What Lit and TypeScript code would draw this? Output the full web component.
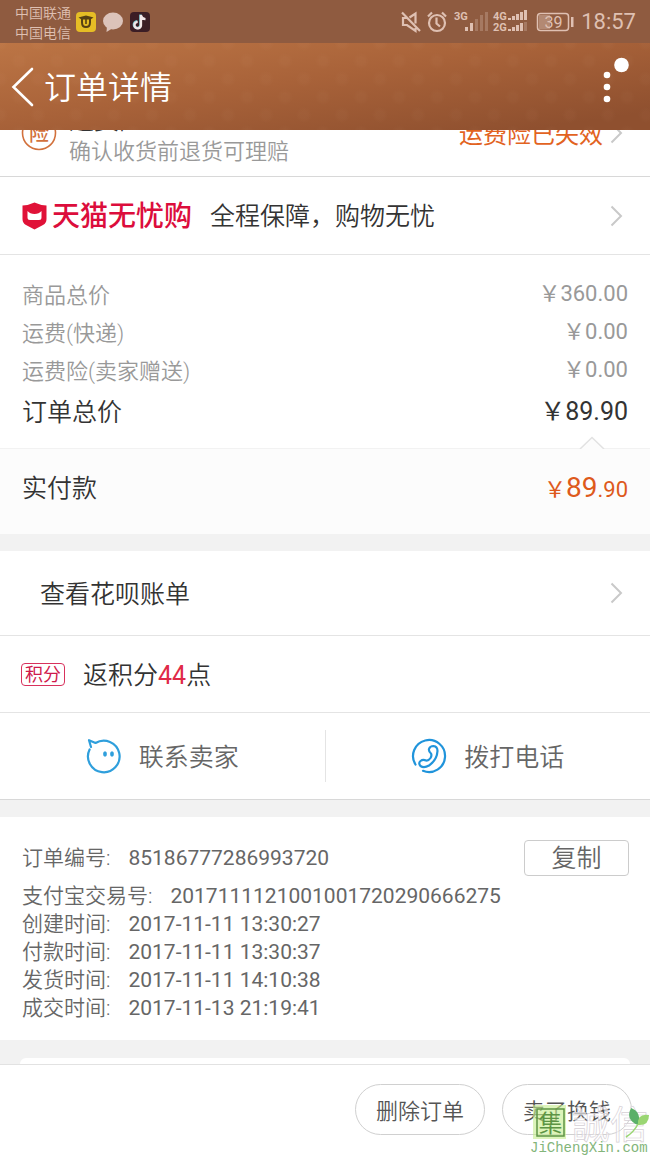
import { LitElement, html, css, svg } from "lit";
import { customElement } from "lit/decorators.js";

const priceLines = [
  { label: "商品总价", value: "￥360.00" },
  { label: "运费(快递)", value: "￥0.00" },
  { label: "运费险(卖家赠送)", value: "￥0.00" },
];

const times = [
  { label: "支付宝交易号:", value: "2017111121001001720290666275" },
  { label: "创建时间:", value: "2017-11-11 13:30:27" },
  { label: "付款时间:", value: "2017-11-11 13:30:37" },
  { label: "发货时间:", value: "2017-11-11 14:10:38" },
  { label: "成交时间:", value: "2017-11-13 21:19:41" },
];

const chevron = html`<svg class="chevron" width="13" height="22" viewBox="0 0 13 22" aria-hidden="true">
  <path d="M1.5 1.5 L11 11 L1.5 20.5" fill="none" stroke="#c9c9c9" stroke-width="2" />
</svg>`;

const bars = (x: number, y: number, w: number, step: number, h: number[], dim: number) =>
  h.map((v, i) => svg`<rect x=${x + i * step} y=${y - v} width=${w} height=${v} opacity=${i >= dim ? 0.3 : 1} />`);

@customElement("status-bar")
class StatusBar extends LitElement {
  static styles = css`
    :host {
      display: block;
      background: #8f5b40;
      color: #dfc0b2;
      font-family: Roboto, "Noto Sans CJK SC", sans-serif;
    }
    .bar {
      display: flex;
      align-items: center;
      justify-content: space-between;
      height: 43px;
      padding: 0 14px 0 15px;
    }
    .side {
      display: flex;
      align-items: center;
    }
    .carriers {
      font-size: 14px;
      line-height: 20px;
      font-weight: 350;
      margin-right: 4px;
      padding-top: 2px;
    }
    .time {
      font-size: 22px;
      line-height: 43px;
      margin-left: 7px;
    }
    svg {
      display: block;
    }
  `;
  render() {
    return html`<div class="bar">
      <div class="side">
        <div class="carriers"><div>中国联通</div><div>中国电信</div></div>
        <svg width="76" height="22" viewBox="0 0 76 22" aria-hidden="true">
          <rect x="1" y="1" width="20" height="20" rx="4" fill="#e6bd25" />
          <path d="M3.500 6.500 Q7 5.500 11 4.500 Q15 5.500 18.500 6.500 L15.500 8.500 H6.500 Z" fill="#574013" />
          <path d="M7 8 V11.500 Q7 16 11 16 Q15 16 15 11.500 V8" fill="none" stroke="#574013" stroke-width="2" />
          <path d="M10.200 8 H11.800 V13 H10.200 Z" fill="#574013" />
          <ellipse cx="38" cy="10" rx="10" ry="8.500" fill="#dcc3ba" />
          <path d="M32 15 L31.500 21 L38 17 Z" fill="#dcc3ba" />
          <rect x="55" y="1" width="20" height="20" rx="4" fill="#3b1d25" />
          <path d="M66 4 V13.500 A3.300 3.300 0 1 1 62.700 10.800" fill="none" stroke="#75c8cf" stroke-width="2.600" transform="translate(-.5 -.4)" />
          <path d="M66 4 V13.500 A3.300 3.300 0 1 1 62.700 10.800 M66 4.500 Q67 8 70.500 8.200" fill="none" stroke="#f2e6e8" stroke-width="2.300" />
        </svg>
      </div>
      <div class="side">
        <svg width="174" height="30" viewBox="402 7 174 30" fill="#dfc0b2" aria-hidden="true">
          <g fill="none" stroke="#dfc0b2" stroke-width="2.200">
            <path d="M409 18 H405 V25 H409 L417.500 31 V28 M411.500 17.500 L417.500 13.500 V23.500 M404 12.500 L422 31" />
            <circle cx="439" cy="23" r="8" />
            <path d="M438.500 17.500 V23.500 L442 26.500 M430 16.500 L434 12.500 M444 12.500 L448 16.500" />
          </g>
          <text x="456" y="20" font-size="11" font-weight="700">3G</text>
          ${bars(467, 31, 3, 5, [4, 8, 12, 16, 19], 2)}
          <text x="495" y="20" font-size="11" font-weight="700">4G</text>
          <text x="495" y="31" font-size="11" font-weight="700">2G</text>
          ${bars(510, 20, 3, 4, [2, 4, 6, 8, 10], 9)}
          ${bars(510, 31, 3, 4, [2, 4, 6, 8, 9], 4)}
          <rect x="541" y="15" width="11" height="14" opacity=".45" />
          <rect x="539.500" y="13.500" width="31" height="17" rx="3" fill="none" stroke="#dfc0b2" stroke-width="1.500" />
          <rect x="573" y="17" width="2.500" height="10" />
          <text x="555.500" y="28" font-size="16" text-anchor="middle">39</text>
        </svg>
        <div class="time">18:57</div>
      </div>
    </div>`;
  }
}

@customElement("app-root")
class AppRoot extends LitElement {
  static styles = css`
    :host {
      display: block;
      position: relative;
      min-height: 100vh;
      overflow: hidden;
      background: #fff;
      color: #333;
      font-family: Roboto, "Noto Sans CJK SC", sans-serif;
      font-weight: 400;
      font-size: 25px;
      line-height: 36px;
    }
    * {
      box-sizing: border-box;
    }
    svg {
      display: block;
      flex: none;
    }
    button {
      font: inherit;
      color: inherit;
      background: none;
      border: 0;
      margin: 0;
      padding: 0;
      cursor: pointer;
    }
    a {
      color: inherit;
      text-decoration: none;
    }
    .cjk {
      font-weight: 350;
    }
    .header {
      display: flex;
      align-items: center;
      height: 87px;
      padding: 0 21px 0 11px;
      color: #fff;
      background:
        radial-gradient(circle at 50% 50%, rgba(255, 220, 190, 0.025) 0 4px, transparent 8px) 0 0 / 38px 36px,
        radial-gradient(circle at 50% 50%, rgba(255, 220, 190, 0.025) 0 4px, transparent 8px) 19px 18px / 38px 36px,
        linear-gradient(172deg, #bc7545 0%, #a86239 45%, #8f502f 90%);
    }
    .title {
      flex: 1;
      margin: 0 0 0 10px;
      padding-top: 3px;
      font-size: 32px;
      line-height: 44px;
      font-weight: 350;
    }
    .row {
      display: flex;
      align-items: center;
      padding: 0 27px 0 21px;
      border-bottom: 1px solid #e4e4e4;
    }
    .grow {
      flex: 1;
    }
    .row .text {
      padding-top: 3px;
    }
    .insurance {
      height: 47px;
      align-items: flex-end;
      overflow: hidden;
      border-bottom-color: #d8d8d8;
      color: #999;
    }
    .insurance .badge {
      margin-bottom: 25px;
    }
    .insurance .desc {
      flex: 1;
      margin-left: 12px;
      padding-bottom: 8px;
      font-size: 22px;
      line-height: 32px;
    }
    .insurance .name {
      color: #333;
      font-size: 25px;
      line-height: 30px;
    }
    .insurance .state {
      color: #e2631f;
      padding-bottom: 23px;
      margin-right: 7px;
      font-size: 24px;
      font-weight: 400;
    }
    .insurance .chevron {
      margin-bottom: 32px;
    }
    .tmall {
      height: 78px;
    }
    .tmall .brand {
      margin: 0 18px 0 4px;
      padding-top: 3px;
      font-size: 28px;
      font-weight: 500;
      color: #dc0d3c;
    }
    .prices {
      padding: 22px 22px 13px;
      margin: 0;
    }
    .line {
      display: flex;
      justify-content: space-between;
      font-size: 22px;
      line-height: 38px;
      color: #999;
    }
    .line dt {
      font-weight: 350;
    }
    .line dd,
    .facts dd {
      margin: 0;
    }
    .line dd {
      line-height: 34px;
    }
    .line.total {
      font-size: 25px;
      line-height: 44px;
      color: #333;
    }
    .total dd {
      line-height: 42px;
    }
    .paid {
      position: relative;
      display: flex;
      align-items: center;
      justify-content: space-between;
      height: 86px;
      padding: 0 22px 6px;
      background: #fcfcfc;
      border-top: 1px solid #f2f2f2;
    }
    .notch {
      position: absolute;
      right: 45px;
      top: -13px;
    }
    .amount {
      color: #de5a1c;
      font-size: 22px;
    }
    .amount b {
      font-size: 28px;
      font-weight: 400;
    }
    .gap {
      height: 17px;
      background: #f2f2f2;
    }
    .bill {
      height: 85px;
      padding-left: 40px;
    }
    .points {
      height: 77px;
    }
    .tag {
      width: 44px;
      margin-right: 18px;
      border: 1px solid #d8315c;
      border-radius: 4px;
      color: #cf1a4c;
      font-size: 18px;
      line-height: 21px;
      font-weight: 400;
      text-align: center;
    }
    .points em {
      font-style: normal;
      font-weight: 400;
      color: #e02a48;
    }
    .contact {
      display: flex;
      align-items: center;
      height: 87px;
      border-bottom: 1px solid #d8d8d8;
      color: #666;
    }
    .contact button {
      flex: 1;
      display: flex;
      align-items: center;
      justify-content: center;
      gap: 17px;
      height: 52px;
      font-weight: 350;
    }
    .contact span {
      padding-top: 4px;
    }
    .contact button + button {
      border-left: 1px solid #e4e4e4;
    }
    .facts {
      padding: 23px 21px 18px 22px;
      margin: 0;
      font-size: 21px;
      line-height: 28px;
      color: #666;
    }
    .fact {
      display: flex;
      gap: 18px;
      align-items: center;
    }
    .fact dt {
      font-weight: 350;
    }
    .order {
      margin-bottom: 6px;
    }
    .copy {
      display: block;
      width: 105px;
      height: 36px;
      padding-top: 2px;
      border: 1px solid #ccc;
      border-radius: 4px;
      font-size: 25px;
      line-height: 32px;
      font-weight: 350;
    }
    .next {
      height: 24px;
      padding: 18px 20px 0;
      background: #f2f2f2;
    }
    .card {
      height: 6px;
      background: #fff;
      border-radius: 6px 6px 0 0;
    }
    .footer {
      display: flex;
      justify-content: flex-end;
      gap: 17px;
      padding: 19px 18px 20px;
      border-top: 1px solid #e2e2e2;
      color: #555;
    }
    .footer button {
      width: 130px;
      height: 51px;
      padding-top: 4px;
      border: 1px solid #d0d0d0;
      border-radius: 26px;
      font-size: 22px;
      font-weight: 350;
    }
    .mark {
      position: absolute;
      right: 0;
      bottom: 0;
    }
    .mark text {
      font-family: "Noto Sans CJK TC", sans-serif;
    }
    .mark .site {
      font-family: "Liberation Mono", monospace;
    }
  `;

  render() {
    return html`
      <status-bar></status-bar>
      <header class="header">
        <button aria-label="返回">
          <svg width="23" height="40" viewBox="0 0 23 40">
            <path d="M21 2 L2.500 20 L21 38" fill="none" stroke="#fff" stroke-width="2.600" stroke-linecap="round" />
          </svg>
        </button>
        <h1 class="title">订单详情</h1>
        <button aria-label="更多">
          <svg width="27" height="60" viewBox="0 0 27 60" fill="#fff">
            <circle cx="5" cy="18" r="3.300" /><circle cx="5" cy="30" r="3.300" /><circle cx="5" cy="42" r="3.300" />
            <circle cx="19.500" cy="8" r="7.300" />
          </svg>
        </button>
      </header>

      <main>
        <a class="row insurance cjk" href="#insurance">
          <svg class="badge" width="36" height="36" viewBox="0 0 36 36">
            <circle cx="18" cy="18" r="16.500" fill="none" stroke="#d2713c" stroke-width="1.600" />
            <text x="18" y="26" font-size="20" font-weight="500" text-anchor="middle" fill="#d2713c">险</text>
          </svg>
          <div class="desc"><div class="name">运费险</div><div>确认收货前退货可理赔</div></div>
          <span class="state">运费险已失效</span>
          ${chevron}
        </a>
        <a class="row tmall" href="#tmall">
          <svg width="27" height="28" viewBox="0 0 27 28">
            <path d="M13.500 .5 Q20 3.500 25.500 3.500 V17 Q25.500 21 22 23 L13.500 27.500 L5 23 Q1.500 21 1.500 17 V3.500 Q7 3.500 13.500 .5 Z" fill="#e01238" />
            <path d="M6.500 9 Q9 12 13.500 12 Q18 12 20.500 9 V15.500 Q20.500 18 18 18 H9 Q6.500 18 6.500 15.500 Z" fill="#fff" />
          </svg>
          <span class="brand">天猫无忧购</span>
          <span class="grow text cjk">全程保障，购物无忧</span>
          ${chevron}
        </a>

        <dl class="prices">
          ${priceLines.map((p) => html`<div class="line"><dt>${p.label}</dt><dd>${p.value}</dd></div>`)}
          <div class="line total"><dt>订单总价</dt><dd>￥89.90</dd></div>
        </dl>
        <div class="paid">
          <svg class="notch" width="26" height="13" viewBox="0 0 26 13">
            <path d="M1 13 L13 1.500 L25 13" fill="#fcfcfc" stroke="#e2e2e2" stroke-width="1.500" />
          </svg>
          <span class="cjk">实付款</span>
          <span class="amount">￥<b>89</b>.90</span>
        </div>
        <div class="gap"></div>

        <a class="row bill" href="#bill"><span class="grow text cjk">查看花呗账单</span>${chevron}</a>
        <div class="row points cjk"><span class="tag">积分</span><span class="text">返积分<em>44</em>点</span></div>
        <div class="contact">
          <button>
            <svg width="36" height="36" viewBox="0 0 36 36" fill="none" stroke="#2f9fdc" stroke-width="2.200">
              <path d="M3.600 11.500 A15.800 15.800 0 1 0 9.500 5 L3 2.200 L5 9" stroke-linejoin="round" stroke-linecap="round" />
              <ellipse cx="19" cy="16" rx="1.900" ry="2.700" fill="#2f9fdc" stroke="none" />
              <ellipse cx="26" cy="16" rx="1.900" ry="2.700" fill="#2f9fdc" stroke="none" />
            </svg>
            <span>联系卖家</span>
          </button>
          <button>
            <svg width="36" height="36" viewBox="0 0 36 36" fill="none" stroke="#2094db" stroke-width="2.200" stroke-linecap="round">
              <path d="M4.500 26.500 A16 16 0 1 1 12 32.800" />
              <path d="M20 15.500 Q17.500 13.500 18 11 Q19 8 22.500 8 Q26.500 8.500 26.500 13 Q26 22 18 27.500 Q13 30.500 9.500 28 Q7 25 9.500 23 Q12 21 15 22.500 Q17.500 23 19.500 20 Q21 17.500 20 15.500 Z" stroke-linejoin="round" />
            </svg>
            <span>拨打电话</span>
          </button>
        </div>
        <div class="gap"></div>

        <dl class="facts">
          <div class="fact order">
            <dt>订单编号:</dt>
            <dd class="grow">85186777286993720</dd>
            <dd><button class="copy">复制</button></dd>
          </div>
          ${times.map((t) => html`<div class="fact"><dt>${t.label}</dt><dd>${t.value}</dd></div>`)}
        </dl>
        <div class="next"><div class="card"></div></div>
      </main>

      <footer class="footer">
        <button>删除订单</button>
        <button>卖了换钱</button>
      </footer>

      <svg class="mark" width="122" height="52" viewBox="0 0 122 52" aria-hidden="true">
        <rect x="5" y="2" width="33" height="34" fill="#c4ec8c" opacity=".6" />
        <rect x="9" y="6" width="27" height="27" fill="none" stroke="#5d9444" stroke-width="1.500" />
        <text x="22.500" y="29" font-size="24" text-anchor="middle" fill="#5d9444">集</text>
        <text x="44" y="35" font-size="38" fill="#fff" fill-opacity=".6" stroke="#d6d0d6" stroke-width=".7">誠信</text>
        <path d="M103 5 Q114 9 110 22 Q97 17 103 5 Z" fill="#5bb069" />
        <path d="M110 22 Q109 10 121 12 Q121 23 110 22 Z" fill="#9ad673" />
        <path d="M110 21 Q106 29 98 34" fill="none" stroke="#9ad673" stroke-width="1.500" />
        <text class="site" x="2" y="49" font-size="14" fill="#83b57a">JiChengXin.com</text>
      </svg>
    `;
  }
}
